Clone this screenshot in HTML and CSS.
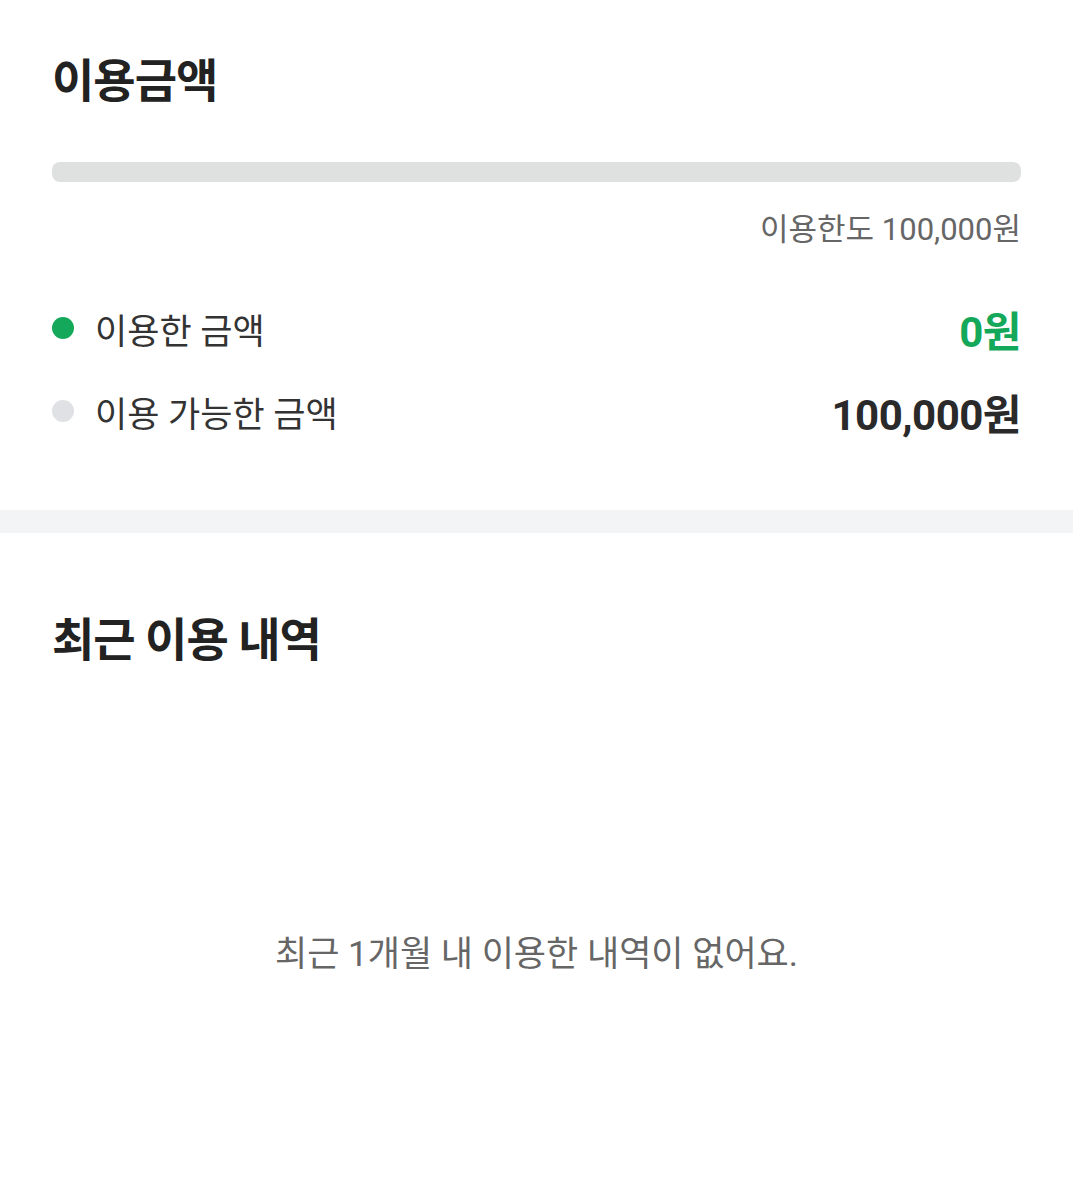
FILE: index.html
```html
<!DOCTYPE html>
<html lang="ko">
<head>
    <meta charset="UTF-8">
    <meta name="viewport" content="width=device-width, initial-scale=1.0">
    <title>이용금액</title>
    <link rel="stylesheet" href="styles.css">
</head>
<body>

<div class="section usage">
    <h2 class="title">이용금액</h2>

    <!-- 이용 금액 진행 막대 -->
    <div class="bar">
        <div class="bar-fill" style="width: 0%"></div>
    </div>
    <p class="limit">이용한도 100,000원</p>

    <div class="rows">
        <div class="row">
            <span class="dot used"></span>
            <span class="label">이용한 금액</span>
            <span class="amount used">0원</span>
        </div>
        <div class="row">
            <span class="dot"></span>
            <span class="label">이용 가능한 금액</span>
            <span class="amount">100,000원</span>
        </div>
    </div>
</div>

<div class="divider"></div>

<div class="section history">
    <h2 class="title">최근 이용 내역</h2>
    <p class="empty">최근 1개월 내 이용한 내역이 없어요.</p>
</div>

</body>
</html>
```

FILE: styles.css
```css
body {
    font-family: Roboto, "Noto Sans CJK KR", sans-serif;
    background-color: #fff;
    color: #222;
    margin: 0;
    padding: 0;
}
.section {
    padding: 0 52px;
}
.usage {
    padding-top: 50px;
    padding-bottom: 74px;
}
.title {
    font-size: 46px;
    font-weight: 700;
    letter-spacing: -1px;
    line-height: 62px;
    margin: 0;
    color: #222;
}
.bar {
    height: 20px;
    margin-top: 50px;
    border-radius: 8px;
    background-color: #dfe1e1;
    overflow: hidden;
}
.bar-fill {
    height: 100%;
    background-color: #13a85a;
}
.limit {
    text-align: right;
    font-size: 31px;
    line-height: 40px;
    color: #666;
    margin: 28px 0 0;
}
.rows {
    margin-top: 53px;
}
.row {
    display: flex;
    align-items: center;
    height: 50px;
    margin-bottom: 33px;
}
.row:last-child {
    margin-bottom: 0;
}
.dot {
    width: 22px;
    height: 22px;
    border-radius: 50%;
    background-color: #dfe1e5;
    margin-right: 21px;
}
.dot.used {
    background-color: #13a85a;
}
.label {
    flex: 1;
    font-size: 35px;
    color: #333;
}
.amount {
    font-size: 42px;
    font-weight: 700;
    letter-spacing: -0.5px;
    color: #2a2a2a;
}
.amount.used {
    color: #13a85a;
}
.divider {
    height: 23px;
    background-color: #f2f4f5;
}
.history {
    padding-top: 76px;
}
.empty {
    text-align: center;
    font-size: 35px;
    color: #666;
    margin: 254px 0 0;
}
```
